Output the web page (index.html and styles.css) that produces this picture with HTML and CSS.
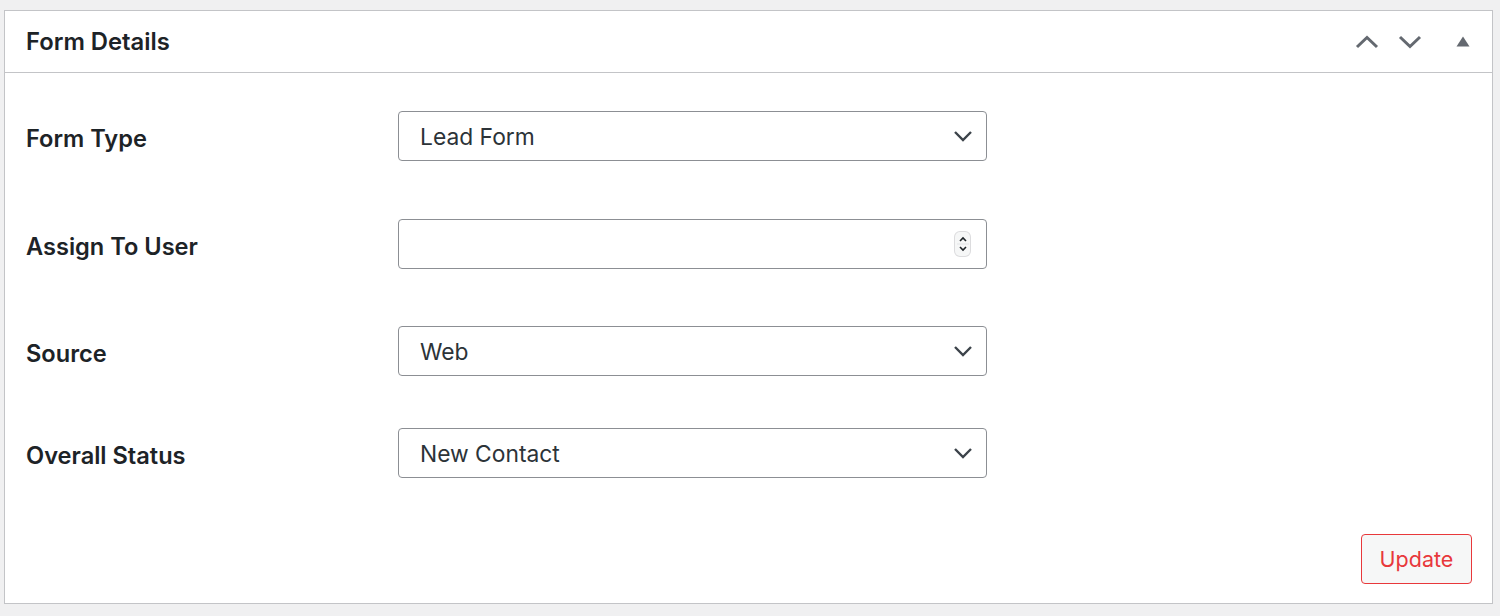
FILE: index.html
```html
<!DOCTYPE html>
<html lang="en">
<head>
<meta charset="utf-8">
<title>Form Details</title>
<link rel="stylesheet" href="styles.css">
</head>
<body>
<div class="panel">
  <div class="panel-header">
    <h2 class="panel-title">Form Details</h2>
    <div class="panel-actions">
      <button class="icon-btn" aria-label="Move up">
        <svg width="24" height="14" viewBox="0 0 24 14"><path d="M2 12 L12 2.5 L22 12" fill="none" stroke="#646970" stroke-width="3"/></svg>
      </button>
      <button class="icon-btn" aria-label="Move down">
        <svg width="24" height="14" viewBox="0 0 24 14"><path d="M2 2 L12 11.5 L22 2" fill="none" stroke="#646970" stroke-width="3"/></svg>
      </button>
      <button class="icon-btn toggle" aria-label="Toggle panel">
        <svg width="14" height="11" viewBox="0 0 14 11"><path d="M7 0.5 L13.5 10.5 L0.5 10.5 Z" fill="#646970"/></svg>
      </button>
    </div>
  </div>
  <div class="panel-body">
    <div class="row row-1">
      <div class="label">Form Type</div>
      <div class="field">
        <span class="field-value">Lead Form</span>
        <svg class="chev" width="20" height="12" viewBox="0 0 20 12"><path d="M2 2 L10 10 L18 2" fill="none" stroke="#3c434a" stroke-width="2.4"/></svg>
      </div>
    </div>
    <div class="row row-2">
      <div class="label">Assign To User</div>
      <div class="field">
        <span class="field-value"></span>
        <span class="spinner">
          <svg width="14" height="22" viewBox="0 0 14 22"><path d="M4 8 L7 5 L10 8" fill="none" stroke="#1d2327" stroke-width="1.6"/><path d="M4 14 L7 17 L10 14" fill="none" stroke="#1d2327" stroke-width="1.6"/><line x1="1" y1="11" x2="13" y2="11" stroke="#e2e4e7" stroke-width="1"/></svg>
        </span>
      </div>
    </div>
    <div class="row row-3">
      <div class="label">Source</div>
      <div class="field">
        <span class="field-value">Web</span>
        <svg class="chev" width="20" height="12" viewBox="0 0 20 12"><path d="M2 2 L10 10 L18 2" fill="none" stroke="#3c434a" stroke-width="2.4"/></svg>
      </div>
    </div>
    <div class="row row-4">
      <div class="label">Overall Status</div>
      <div class="field">
        <span class="field-value">New Contact</span>
        <svg class="chev" width="20" height="12" viewBox="0 0 20 12"><path d="M2 2 L10 10 L18 2" fill="none" stroke="#3c434a" stroke-width="2.4"/></svg>
      </div>
    </div>
    <div class="actions">
      <button class="update-btn">Update</button>
    </div>
  </div>
</div>
</body>
</html>
```

FILE: styles.css
```css
* { box-sizing: border-box; }

body {
  margin: 0;
  background: #f0f0f1;
  font-family: Inter, "Liberation Sans", Arial, sans-serif;
  color: #1d2327;
}

.panel {
  margin: 10px 7px 0 4px;
  height: 594px;
  background: #ffffff;
  border: 1px solid #c3c4c7;
  display: flex;
  flex-direction: column;
}

.panel-header {
  height: 62px;
  border-bottom: 1px solid #c3c4c7;
  display: flex;
  align-items: center;
  justify-content: space-between;
  padding: 0 22px 0 21px;
}

.panel-title {
  margin: 0;
  font-size: 23.8px;
  font-weight: 600;
  color: #1d2327;
}

.panel-actions {
  display: flex;
  align-items: center;
}

.icon-btn {
  border: 0;
  background: none;
  padding: 0;
  margin: 0 0 0 19px;
  width: 24px;
  height: 24px;
  display: flex;
  align-items: center;
  justify-content: center;
}

.icon-btn.toggle {
  margin-left: 34px;
  width: 14px;
}

.panel-body {
  flex: 1;
  display: flex;
  flex-direction: column;
  padding: 0 20px 19px 21px;
}

.row {
  display: flex;
  align-items: center;
  height: 50px;
}

.row-1 { margin-top: 38px; }
.row-2 { margin-top: 58px; }
.row-3 { margin-top: 57px; }
.row-4 { margin-top: 52px; }

.label {
  width: 372px;
  padding-top: 4px;
  font-size: 23.6px;
  font-weight: 600;
  color: #1d2327;
}

.field {
  width: 589px;
  height: 50px;
  border: 1px solid #8c8f94;
  border-radius: 4px;
  display: flex;
  align-items: center;
  justify-content: space-between;
  padding: 0 13px 0 21px;
  font-size: 22.8px;
  color: #2c3338;
}

.chev { display: block; }

.spinner {
  display: flex;
  align-items: center;
  justify-content: center;
  width: 15px;
  height: 24px;
  border-radius: 5px;
  background: #f6f7f7;
  box-shadow: 0 0 0 1px #dcdcde;
  margin-right: 3px;
}

.actions {
  margin-top: auto;
  display: flex;
  justify-content: flex-end;
}

.update-btn {
  width: 111px;
  height: 50px;
  border: 1px solid #e8383b;
  border-radius: 4px;
  background: #f6f7f7;
  color: #e8383b;
  font-family: Inter, "Liberation Sans", Arial, sans-serif;
  font-size: 21.5px;
  font-weight: 400;
  padding: 0;
}
```
